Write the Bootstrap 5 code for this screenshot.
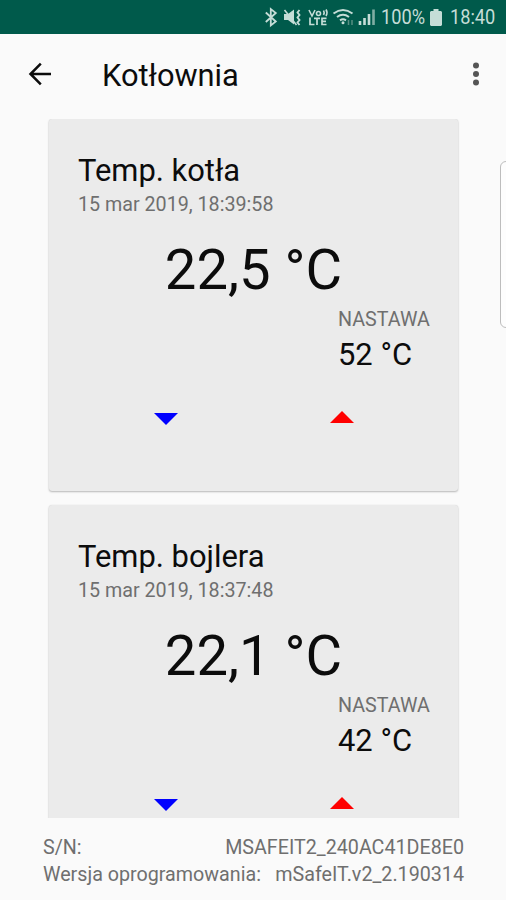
<!DOCTYPE html>
<html lang="pl">
<head>
<meta charset="utf-8">
<meta name="viewport" content="width=device-width, initial-scale=1">
<title>Kotłownia</title>
<link href="https://cdn.jsdelivr.net/npm/bootstrap@5.3.0/dist/css/bootstrap.min.css" rel="stylesheet">
<style>
body{font-family:Roboto,"Noto Sans",sans-serif;background:#fafafa;color:#0c0c0c;height:900px}
.status{height:34px;background:#005a4b;color:#c5ddd7;font-size:20px;line-height:34px;padding-right:10px}
.status svg{display:block;flex:none}
.narrow{display:block;transform-origin:0 50%;transform:scaleX(.91);white-space:nowrap}
.pct{width:45px;margin-left:3px}.clock{width:46px}
.appbar{height:85px;padding:0 0 5px 26px}
.appbar h1{font-size:30.8px;line-height:36px;margin:3px 0 0 48px;font-weight:400}
.list{height:699px;padding:0 48px 0 49px}
.sensor{height:372px;background:#ebebeb;border:0;border-radius:3px;padding:33px 29px 0;box-shadow:0 1px 2px rgba(0,0,0,.26),0 0 1px rgba(0,0,0,.12);margin-bottom:13.500px;flex:none;color:inherit}
.sensor h2{font-size:30.9px;line-height:37px;margin:0;font-weight:400}
.muted{font-size:19.7px;line-height:24px;color:#6f6f6f}
.stamp{margin-top:4px}
.reading{font-size:56.2px;line-height:66px;margin-top:20px}
.setting{width:91px;margin-top:5px}
.goal{font-size:30.9px;line-height:36px;margin-top:5px}
.arrows{margin-top:33px;padding:0 75px 0 76px}
.info{padding:16px 42px 0 43px}
.info .muted{line-height:27px}
.handle{position:absolute;left:500px;top:161px;width:12px;height:167px;border:1px solid #bdbdbd;border-radius:6px;background:#fdfdfd}
</style>
</head>
<body class="position-relative overflow-hidden">
<div class="status d-flex align-items-center justify-content-end">
  <svg width="118" height="34" viewBox="0 0 118 34" fill="none" stroke="#c5ddd7">
    <path d="M5.500 12.500l10 9-5 4V9l5 4-10 9" transform="translate(.3 0)" stroke-width="1.800"/>
    <path d="M24 14h4l6-4.500v15l-6-4.500h-4z" fill="#c5ddd7" stroke="none"/>
    <path d="M24.500 10l12 15" stroke-width="1.600"/>
    <path d="M39.500 10l-2 2.500 2 2.500-2 2.500 2 2.500-2 2.500 2 2.500" stroke-width="1.900"/>
    <path d="M49 10l3 6 3-6M66 9.500q2 3 0 6.500M63.500 10.500q1.300 2.200 0 4.500" stroke-width="1.600"/>
    <circle cx="58.500" cy="13.500" r="2" stroke-width="1.600"/>
    <path d="M50 17.500v7h4.500M54 18.300h6M57 18.300V25M66.500 18.300H62v6.200h4.500M62 21.300h4" stroke-width="1.700"/>
    <path d="M73.500 13.500q9.500-7 19 0M77 17q6-4.500 12 0M80 20.300q3-2 6 0" stroke-width="2"/>
    <circle cx="83" cy="22.800" r="1.500" fill="#c5ddd7" stroke="none"/>
    <path d="M88.500 25v-5M92 20v5" stroke="#578f83" stroke-width="1.500"/>
    <path d="M100 25v-4M104.500 25v-7M109 25V14" stroke-width="2.600"/>
    <path d="M113.500 25V9.500" stroke-width="2.600" stroke="#80aea3"/>
  </svg>
  <span class="pct"><span class="narrow">100%</span></span>
  <svg class="ms-1 me-2" width="12" height="17" viewBox="0 0 12 17"><path d="M3.500 0h5v2H11l1 1v13l-1 1H1l-1-1V3l1-1h2.500z" fill="#c5ddd7"/></svg>
  <span class="clock"><span class="narrow">18:40</span></span>
</div>
<header class="appbar d-flex align-items-center">
  <svg width="28" height="26" viewBox="0 0 28 26" fill="none" stroke="#0c0c0c" stroke-width="2.500"><path d="M25 13H4.500M14.800 2.700L4.500 13l10.300 10.300"/></svg>
  <h1>Kotłownia</h1>
  <svg class="ms-auto me-4" width="12" height="26" viewBox="0 0 12 26" fill="#555"><circle cx="6" cy="4.500" r="3"/><circle cx="6" cy="13" r="3"/><circle cx="6" cy="21.500" r="3"/></svg>
</header>
<main class="list d-flex flex-column overflow-hidden">
  <section class="card sensor">
    <h2>Temp. kotła</h2>
    <div class="muted stamp">15 mar 2019, 18:39:58</div>
    <div class="reading text-center">22,5 °C</div>
    <div class="setting ms-auto text-nowrap"><div class="muted">NASTAWA</div><div class="goal">52 °C</div></div>
    <div class="arrows d-flex justify-content-between">
      <svg width="24" height="24" viewBox="0 0 24 24"><path d="M0 7h24L12 19z" fill="#00f"/></svg>
      <svg width="24" height="24" viewBox="0 0 24 24"><path d="M0 17h24L12 5z" fill="#f00"/></svg>
    </div>
  </section>
  <section class="card sensor">
    <h2>Temp. bojlera</h2>
    <div class="muted stamp">15 mar 2019, 18:37:48</div>
    <div class="reading text-center">22,1 °C</div>
    <div class="setting ms-auto text-nowrap"><div class="muted">NASTAWA</div><div class="goal">42 °C</div></div>
    <div class="arrows d-flex justify-content-between">
      <svg width="24" height="24" viewBox="0 0 24 24"><path d="M0 7h24L12 19z" fill="#00f"/></svg>
      <svg width="24" height="24" viewBox="0 0 24 24"><path d="M0 17h24L12 5z" fill="#f00"/></svg>
    </div>
  </section>
</main>
<footer class="info">
  <div class="muted d-flex justify-content-between"><span>S/N:</span><span>MSAFEIT2_240AC41DE8E0</span></div>
  <div class="muted d-flex justify-content-between"><span>Wersja oprogramowania:</span><span>mSafeIT.v2_2.190314</span></div>
</footer>
<div class="handle"></div>
<script src="https://cdn.jsdelivr.net/npm/bootstrap@5.3.0/dist/js/bootstrap.bundle.min.js"></script>
</body>
</html>
